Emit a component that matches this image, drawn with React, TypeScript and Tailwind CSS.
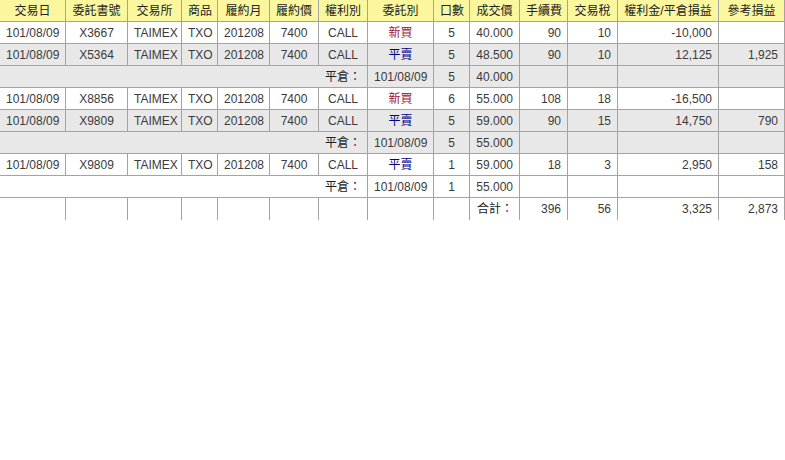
import React from 'react'

const widths = [65, 62, 54, 36, 52, 49, 49, 66, 36, 50, 48, 50, 101, 66]
const headers = ['交易日', '委託書號', '交易所', '商品', '履約月', '履約價', '權利別', '委託別', '口數', '成交價', '手續費', '交易稅', '權利金/平倉損益', '參考損益']

type Trade = {
  kind: 'trade'
  no: string
  side: '新買' | '平賣'
  qty: string
  price: string
  fee: string
  tax: string
  pl: string
  ref: string
  gray: boolean
}
type Close = { kind: 'close'; qty: string; price: string; gray: boolean }

const rows: (Trade | Close)[] = [
  { kind: 'trade', no: 'X3667', side: '新買', qty: '5', price: '40.000', fee: '90', tax: '10', pl: '-10,000', ref: '', gray: false },
  { kind: 'trade', no: 'X5364', side: '平賣', qty: '5', price: '48.500', fee: '90', tax: '10', pl: '12,125', ref: '1,925', gray: true },
  { kind: 'close', qty: '5', price: '40.000', gray: true },
  { kind: 'trade', no: 'X8856', side: '新買', qty: '6', price: '55.000', fee: '108', tax: '18', pl: '-16,500', ref: '', gray: false },
  { kind: 'trade', no: 'X9809', side: '平賣', qty: '5', price: '59.000', fee: '90', tax: '15', pl: '14,750', ref: '790', gray: true },
  { kind: 'close', qty: '5', price: '55.000', gray: true },
  { kind: 'trade', no: 'X9809', side: '平賣', qty: '1', price: '59.000', fee: '18', tax: '3', pl: '2,950', ref: '158', gray: false },
  { kind: 'close', qty: '1', price: '55.000', gray: false },
]

const td = 'border border-[#a3a3a3] px-[6px] py-0 whitespace-nowrap'
const c = `${td} text-center`
const r = `${td} text-right`

export default function App() {
  return (
    <div className="w-[785px] h-[460px] overflow-hidden bg-white text-[12px] text-[#3a3a3a] font-['Liberation_Sans','Noto_Sans_CJK_TC',sans-serif]">
      <table className="table-fixed border-collapse w-[785px] -mt-px -ml-px">
        <colgroup>
          {widths.map((w, i) => (
            <col key={i} style={{ width: i === 0 ? w + 1 : w }} />
          ))}
        </colgroup>
        <thead>
          <tr className="h-[22px] bg-[#fbf79e]">
            {headers.map((h) => (
              <th key={h} className={`${c} px-[2px] font-normal text-[12px] text-[#222222]`}>{h}</th>
            ))}
          </tr>
        </thead>
        <tbody>
          {rows.map((row, i) =>
            row.kind === 'trade' ? (
              <tr key={i} className={`h-[22px] ${row.gray ? 'bg-[#e8e8e8]' : 'bg-white'}`}>
                <td className={c}>101/08/09</td>
                <td className={c}>{row.no}</td>
                <td className={c}>TAIMEX</td>
                <td className={c}>TXO</td>
                <td className={c}>201208</td>
                <td className={c}>7400</td>
                <td className={c}>CALL</td>
                <td className={`${c} ${row.side === '新買' ? 'text-[#a0102a]' : 'text-[#00008b]'}`}>{row.side}</td>
                <td className={c}>{row.qty}</td>
                <td className={r}>{row.price}</td>
                <td className={r}>{row.fee}</td>
                <td className={r}>{row.tax}</td>
                <td className={r}>{row.pl}</td>
                <td className={r}>{row.ref}</td>
              </tr>
            ) : (
              <tr key={i} className={`h-[22px] ${row.gray ? 'bg-[#e8e8e8]' : 'bg-white'}`}>
                <td colSpan={7} className={`${r} text-[#222222]`}>平倉：</td>
                <td className={c}>101/08/09</td>
                <td className={c}>{row.qty}</td>
                <td className={r}>{row.price}</td>
                <td className={td}></td>
                <td className={td}></td>
                <td className={td}></td>
                <td className={td}></td>
              </tr>
            )
          )}
          <tr className="h-[22px] bg-white">
            {Array.from({ length: 9 }).map((_, i) => (
              <td key={i} className={`${td} border-b-0`}></td>
            ))}
            <td className={`${r} border-b-0 text-[#222222]`}>合計：</td>
            <td className={`${r} border-b-0`}>396</td>
            <td className={`${r} border-b-0`}>56</td>
            <td className={`${r} border-b-0`}>3,325</td>
            <td className={`${r} border-b-0`}>2,873</td>
          </tr>
        </tbody>
      </table>
    </div>
  )
}
